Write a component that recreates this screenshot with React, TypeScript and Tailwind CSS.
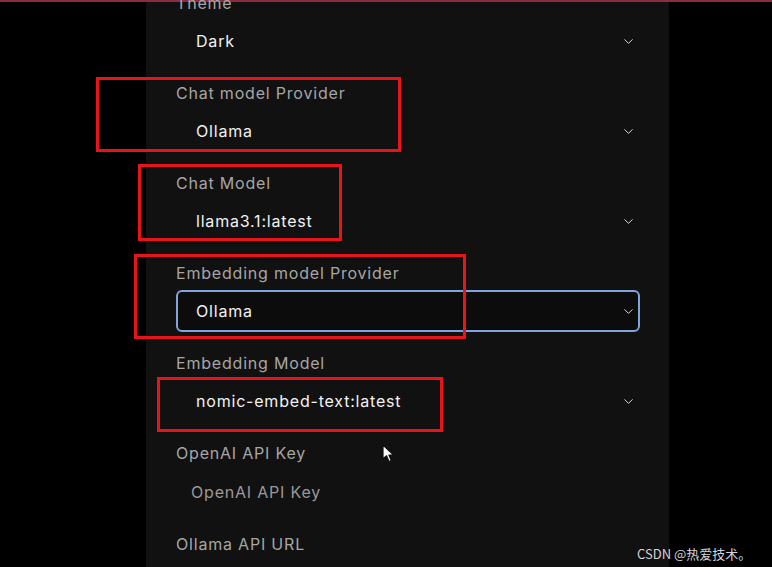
import { ChevronDown } from 'lucide-react';

type Field = { label: string; value?: string; placeholder?: string; focused?: boolean };

const fields: Field[] = [
    { label: 'Theme', value: 'Dark' },
    { label: 'Chat model Provider', value: 'Ollama' },
    { label: 'Chat Model', value: 'llama3.1:latest' },
    { label: 'Embedding model Provider', value: 'Ollama', focused: true },
    { label: 'Embedding Model', value: 'nomic-embed-text:latest' },
    { label: 'OpenAI API Key', placeholder: 'OpenAI API Key' },
    { label: 'Ollama API URL', placeholder: '' },
];

function SettingField({ field }: { field: Field }) {
    return (
        <div className="mb-[19px]">
            <div className="text-[16px] leading-6 text-[#a6a6a6]">{field.label}</div>
            {field.value !== undefined ? (
                <div
                    className={`mt-[5px] h-[42px] flex items-center justify-between rounded-md border-2 pl-[18px] pr-[2px] ${
                        field.focused ? 'border-[#7ea6dc] bg-[#0c0c0c]' : 'border-transparent'
                    }`}
                >
                    <span className="text-[16px] text-[#f2f2f2]">{field.value}</span>
                    <ChevronDown size={15} strokeWidth={1.6} className="text-[#d6d6d6]" />
                </div>
            ) : (
                <div className="mt-[6px] h-[42px] flex items-center rounded-md border-2 border-transparent pl-[13px]">
                    <span className="text-[16px] text-[#9a9a9a]">{field.placeholder}</span>
                </div>
            )}
        </div>
    );
}

export default function App() {
    return (
        <div
            className="relative w-[772px] h-[567px] overflow-hidden bg-black tracking-[0.05em] flex flex-col"
            style={{ fontFamily: 'Inter, "Noto Sans", sans-serif' }}
        >
            {/* top edge of the browser window */}
            <div className="h-[2px] shrink-0 bg-[#8c2b42]" />

            {/* settings panel */}
            <div className="ml-[146px] w-[523px] flex-1 flex flex-col bg-[#111111] pl-[30px] pr-[29px]">
                <div className="-mt-[11px] flex flex-col">
                    {fields.map((f) => (
                        <SettingField key={f.label} field={f} />
                    ))}
                </div>
            </div>

            {/* red annotation boxes */}
            <div className="absolute left-[96px] top-[77px] w-[305px] h-[75px] border-[3px] border-[#e8141c]" />
            <div className="absolute left-[138px] top-[164px] w-[204px] h-[77px] border-[3px] border-[#e8141c]" />
            <div className="absolute left-[134px] top-[254px] w-[332px] h-[85px] border-[3px] border-[#e8141c]" />
            <div className="absolute left-[157px] top-[377px] w-[286px] h-[55px] border-[3px] border-[#e8141c]" />

            {/* mouse pointer */}
            <svg className="absolute left-[382px] top-[444px]" width="14" height="20" viewBox="0 0 14 20">
                <path
                    d="M1 1 L1 15 L4.5 11.8 L7 17.5 L9.3 16.5 L6.9 11 L11.5 11 Z"
                    fill="#ffffff"
                    stroke="#111111"
                    strokeWidth="1.2"
                    strokeLinejoin="round"
                />
            </svg>

            {/* watermark */}
            <div
                className="absolute left-[637px] top-[544px] text-[13px] tracking-normal text-[#d4d4d4] whitespace-pre"
                style={{ fontFamily: '"Noto Sans CJK SC", sans-serif' }}
            >
                CSDN @热爱技术。
            </div>
        </div>
    );
}
